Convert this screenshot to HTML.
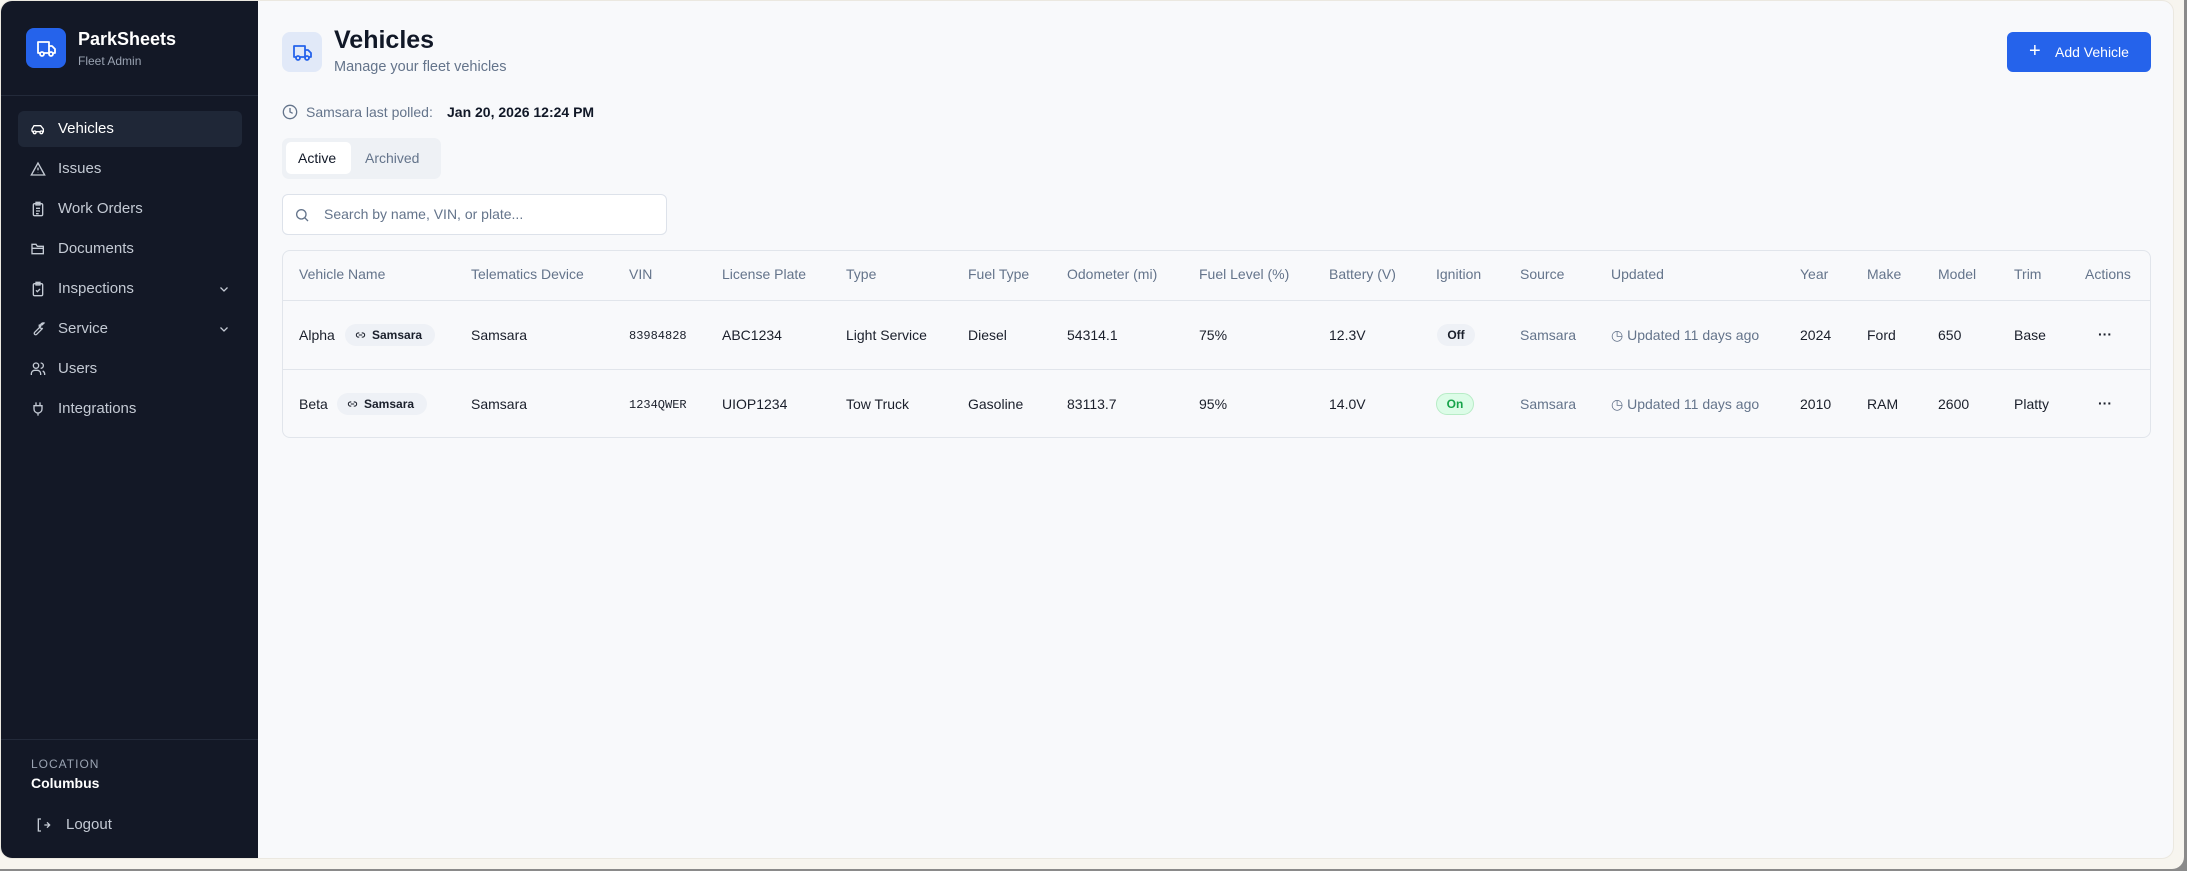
<!DOCTYPE html>
<html><head><meta charset="utf-8"><style>
*{box-sizing:border-box;margin:0;padding:0}
body{width:2187px;height:871px;background:#8a8a8a;font-family:"Liberation Sans",sans-serif;position:relative;overflow:hidden}
.frame{position:absolute;left:0;top:0;width:2184px;height:869px;background:#f7f5ef;border-radius:0 0 12px 0}
.app{position:absolute;left:0;top:0;width:2174px;height:859px;background:#f8f9fb;border-radius:12px;overflow:hidden;border:1px solid #ebe8e0}
.side{position:absolute;left:0;top:0;width:257px;height:859px;background:#131826}
.a{position:absolute;white-space:nowrap}
.nav{position:absolute;left:17px;width:224px;height:36px;border-radius:6px;color:#c4cad4;font-size:15px}
.nav .t{position:absolute;left:40px;top:9px}
.nav svg{position:absolute;left:12px;top:10px}
.nav .ch{left:auto;right:12px;top:12px}
.hd{color:#64748b;font-size:14px;position:absolute;top:265px}
.c{position:absolute;font-size:14px;color:#1a1f2b;white-space:nowrap}
.g{color:#64748b}
.mono{font-family:"Liberation Mono",monospace;font-size:12px}
.pill{position:absolute;height:22px;border-radius:11px;background:#eef1f6;font-size:12px;font-weight:bold;line-height:22px;color:#1a1f2b}
</style></head><body>
<div class="frame"></div>
<div class="app">
<div class="side">
 <div class="a" style="left:25px;top:27px;width:40px;height:40px;background:#2563eb;border-radius:8px">
  <svg width="40" height="40" viewBox="0 0 40 40" fill="none" stroke="#fff" stroke-width="1.8" stroke-linecap="round" stroke-linejoin="round"><path d="M12 25V14h11v11M23 18h3l3 3v4h-2M12 25h2M18 25h5"/><circle cx="16" cy="26" r="2"/><circle cx="25" cy="26" r="2"/></svg>
 </div>
 <div class="a" style="left:77px;top:28px;color:#fff;font-size:18px;font-weight:bold">ParkSheets</div>
 <div class="a" style="left:77px;top:53px;color:#9aa3b2;font-size:12px">Fleet Admin</div>
 <div class="a" style="left:0;top:94px;width:257px;height:1px;background:#232a3a"></div>

 <div class="nav" style="top:110px;background:#1f2737;color:#fff"><svg width="16" height="16" viewBox="0 0 24 24" fill="none" stroke="currentColor" stroke-width="2"><path d="M3 16V12l3-5h10l4 5v4h-2M3 16h2M9 16h6"/><circle cx="7" cy="17" r="2"/><circle cx="17" cy="17" r="2"/></svg><span class="t">Vehicles</span></div>
 <div class="nav" style="top:150px"><svg width="16" height="16" viewBox="0 0 24 24" fill="none" stroke="currentColor" stroke-width="2"><path d="M12 3L2 21h20zM12 10v4M12 17v.5"/></svg><span class="t">Issues</span></div>
 <div class="nav" style="top:190px"><svg width="16" height="16" viewBox="0 0 24 24" fill="none" stroke="currentColor" stroke-width="2"><rect x="5" y="4" width="14" height="18" rx="2"/><path d="M9 2h6v4H9zM9 11h6M9 15h6M9 19h4"/></svg><span class="t">Work Orders</span></div>
 <div class="nav" style="top:230px"><svg width="16" height="16" viewBox="0 0 24 24" fill="none" stroke="currentColor" stroke-width="2"><path d="M3 19V5h6l2 3h9v11zM3 11h18"/></svg><span class="t">Documents</span></div>
 <div class="nav" style="top:270px"><svg width="16" height="16" viewBox="0 0 24 24" fill="none" stroke="currentColor" stroke-width="2"><rect x="5" y="4" width="14" height="18" rx="2"/><path d="M9 2h6v4H9zM9 14l2 2 4-4"/></svg><span class="t">Inspections</span><svg class="ch" width="12" height="12" viewBox="0 0 24 24" fill="none" stroke="currentColor" stroke-width="2.5"><path d="M5 9l7 7 7-7"/></svg></div>
 <div class="nav" style="top:310px"><svg width="16" height="16" viewBox="0 0 24 24" fill="none" stroke="currentColor" stroke-width="2"><path d="M14 6a4 4 0 0 0 5 5l-9 9a2 2 0 0 1-3-3l9-9a4 4 0 0 1 5-5l-3 3z"/></svg><span class="t">Service</span><svg class="ch" width="12" height="12" viewBox="0 0 24 24" fill="none" stroke="currentColor" stroke-width="2.5"><path d="M5 9l7 7 7-7"/></svg></div>
 <div class="nav" style="top:350px"><svg width="16" height="16" viewBox="0 0 24 24" fill="none" stroke="currentColor" stroke-width="2"><circle cx="9" cy="7" r="4"/><path d="M2 21v-2a5 5 0 0 1 5-5h4a5 5 0 0 1 5 5v2M16 3a4 4 0 0 1 0 8M22 21v-2a5 5 0 0 0-3-4"/></svg><span class="t">Users</span></div>
 <div class="nav" style="top:390px"><svg width="16" height="16" viewBox="0 0 24 24" fill="none" stroke="currentColor" stroke-width="2"><path d="M9 2v5M15 2v5M6 7h12v5a6 6 0 0 1-12 0zM12 18v4"/></svg><span class="t">Integrations</span></div>

 <div class="a" style="left:0;top:738px;width:257px;height:1px;background:#232a3a"></div>
 <div class="a" style="left:30px;top:756px;color:#9aa3b2;font-size:12px;letter-spacing:1px">LOCATION</div>
 <div class="a" style="left:30px;top:774px;color:#fff;font-size:14px;font-weight:bold">Columbus</div>
 <svg class="a" style="left:34px;top:816px" width="16" height="16" viewBox="0 0 24 24" fill="none" stroke="#c4cad4" stroke-width="2"><path d="M9 3H5v18h4M14 12h8M18 8l4 4-4 4"/></svg>
 <div class="a" style="left:65px;top:815px;color:#c4cad4;font-size:15px">Logout</div>
</div>

<div class="a" style="left:281px;top:31px;width:40px;height:40px;background:#e1e9f8;border-radius:8px">
 <svg width="40" height="40" viewBox="0 0 40 40" fill="none" stroke="#2563eb" stroke-width="1.8" stroke-linecap="round" stroke-linejoin="round"><path d="M12 25V14h11v11M23 18h3l3 3v4h-2M12 25h2M18 25h5"/><circle cx="16" cy="26" r="2"/><circle cx="25" cy="26" r="2"/></svg>
</div>
<div class="a" style="left:333px;top:25px;font-size:25px;font-weight:bold;color:#111827">Vehicles</div>
<div class="a" style="left:333px;top:58px;font-size:14.5px;color:#64748b">Manage your fleet vehicles</div>
<div class="a" style="left:2006px;top:31px;width:144px;height:40px;background:#2563eb;border-radius:6px;color:#fff;font-size:14px">
 <span class="a" style="left:22px;top:8px;font-size:20px">+</span><span class="a" style="left:48px;top:12px">Add Vehicle</span></div>

<svg class="a" style="left:281px;top:103px" width="16" height="16" viewBox="0 0 24 24" fill="none" stroke="#64748b" stroke-width="2"><circle cx="12" cy="12" r="10"/><path d="M12 6v6l4 2"/></svg>
<div class="a" style="left:305px;top:103px;font-size:14px;color:#64748b">Samsara last polled:</div>
<div class="a" style="left:446px;top:103px;font-size:14px;color:#111827;font-weight:bold">Jan 20, 2026 12:24 PM</div>

<div class="a" style="left:281px;top:137px;width:159px;height:41px;background:#eef1f5;border-radius:7px">
 <div class="a" style="left:4px;top:4px;width:65px;height:32px;background:#fff;border-radius:5px"></div>
 <span class="a" style="left:16px;top:12px;font-size:14px;color:#111827">Active</span>
 <span class="a" style="left:83px;top:12px;font-size:14px;color:#64748b">Archived</span>
</div>

<div class="a" style="left:281px;top:193px;width:385px;height:41px;background:#fff;border:1px solid #dde2ea;border-radius:6px">
 <svg class="a" style="left:11px;top:12px" width="16" height="16" viewBox="0 0 24 24" fill="none" stroke="#64748b" stroke-width="2"><circle cx="11" cy="11" r="7"/><path d="M16 16l5 5"/></svg>
 <span class="a" style="left:41px;top:11px;font-size:14px;color:#64748b">Search by name, VIN, or plate...</span>
</div>

<div class="a" style="left:281px;top:249px;width:1869px;height:188px;border:1px solid #e1e5eb;border-radius:8px">
 <div class="a" style="left:0;top:49px;width:1867px;height:1px;background:#e1e5eb"></div>
 <div class="a" style="left:0;top:118px;width:1867px;height:1px;background:#e1e5eb"></div>
</div>
<div class="hd" style="left:298px">Vehicle Name</div><div class="hd" style="left:470px">Telematics Device</div><div class="hd" style="left:628px">VIN</div><div class="hd" style="left:721px">License Plate</div><div class="hd" style="left:845px">Type</div><div class="hd" style="left:967px">Fuel Type</div><div class="hd" style="left:1066px">Odometer (mi)</div><div class="hd" style="left:1198px">Fuel Level (%)</div><div class="hd" style="left:1328px">Battery (V)</div><div class="hd" style="left:1435px">Ignition</div><div class="hd" style="left:1519px">Source</div><div class="hd" style="left:1610px">Updated</div><div class="hd" style="left:1799px">Year</div><div class="hd" style="left:1866px">Make</div><div class="hd" style="left:1937px">Model</div><div class="hd" style="left:2013px">Trim</div><div class="hd" style="left:2084px">Actions</div>

<!-- row 1 -->
<div class="c" style="left:298px;top:326px">Alpha</div>
<div class="pill" style="left:344px;top:323px;width:90px"><svg class="a" style="left:10px;top:6px" width="11" height="10" viewBox="0 0 24 24" fill="none" stroke="#1a1f2b" stroke-width="2.5"><path d="M9 7H7a5 5 0 0 0 0 10h2M15 7h2a5 5 0 0 1 0 10h-2M8 12h8"/></svg><span class="a" style="left:27px">Samsara</span></div>
<div class="c" style="left:470px;top:326px">Samsara</div>
<div class="c mono" style="left:628px;top:328px">83984828</div>
<div class="c" style="left:721px;top:326px">ABC1234</div>
<div class="c" style="left:845px;top:326px">Light Service</div>
<div class="c" style="left:967px;top:326px">Diesel</div>
<div class="c" style="left:1066px;top:326px">54314.1</div>
<div class="c" style="left:1198px;top:326px">75%</div>
<div class="c" style="left:1328px;top:326px">12.3V</div>
<div class="pill" style="left:1436px;top:323px;width:38px;text-align:center">Off</div>
<div class="c g" style="left:1519px;top:326px">Samsara</div>
<div class="c g" style="left:1610px;top:326px">◷ Updated 11 days ago</div>
<div class="c" style="left:1799px;top:326px">2024</div>
<div class="c" style="left:1866px;top:326px">Ford</div>
<div class="c" style="left:1937px;top:326px">650</div>
<div class="c" style="left:2013px;top:326px">Base</div>
<div class="c" style="left:2097px;top:325px;font-weight:bold">···</div>

<!-- row 2 -->
<div class="c" style="left:298px;top:395px">Beta</div>
<div class="pill" style="left:336px;top:392px;width:90px"><svg class="a" style="left:10px;top:6px" width="11" height="10" viewBox="0 0 24 24" fill="none" stroke="#1a1f2b" stroke-width="2.5"><path d="M9 7H7a5 5 0 0 0 0 10h2M15 7h2a5 5 0 0 1 0 10h-2M8 12h8"/></svg><span class="a" style="left:27px">Samsara</span></div>
<div class="c" style="left:470px;top:395px">Samsara</div>
<div class="c mono" style="left:628px;top:397px">1234QWER</div>
<div class="c" style="left:721px;top:395px">UIOP1234</div>
<div class="c" style="left:845px;top:395px">Tow Truck</div>
<div class="c" style="left:967px;top:395px">Gasoline</div>
<div class="c" style="left:1066px;top:395px">83113.7</div>
<div class="c" style="left:1198px;top:395px">95%</div>
<div class="c" style="left:1328px;top:395px">14.0V</div>
<div class="pill" style="left:1435px;top:392px;width:38px;text-align:center;background:#dcfce7;border:1px solid #b7ecc6;color:#16a34a;line-height:20px">On</div>
<div class="c g" style="left:1519px;top:395px">Samsara</div>
<div class="c g" style="left:1610px;top:395px">◷ Updated 11 days ago</div>
<div class="c" style="left:1799px;top:395px">2010</div>
<div class="c" style="left:1866px;top:395px">RAM</div>
<div class="c" style="left:1937px;top:395px">2600</div>
<div class="c" style="left:2013px;top:395px">Platty</div>
<div class="c" style="left:2097px;top:394px;font-weight:bold">···</div>
</div>
</body></html>
